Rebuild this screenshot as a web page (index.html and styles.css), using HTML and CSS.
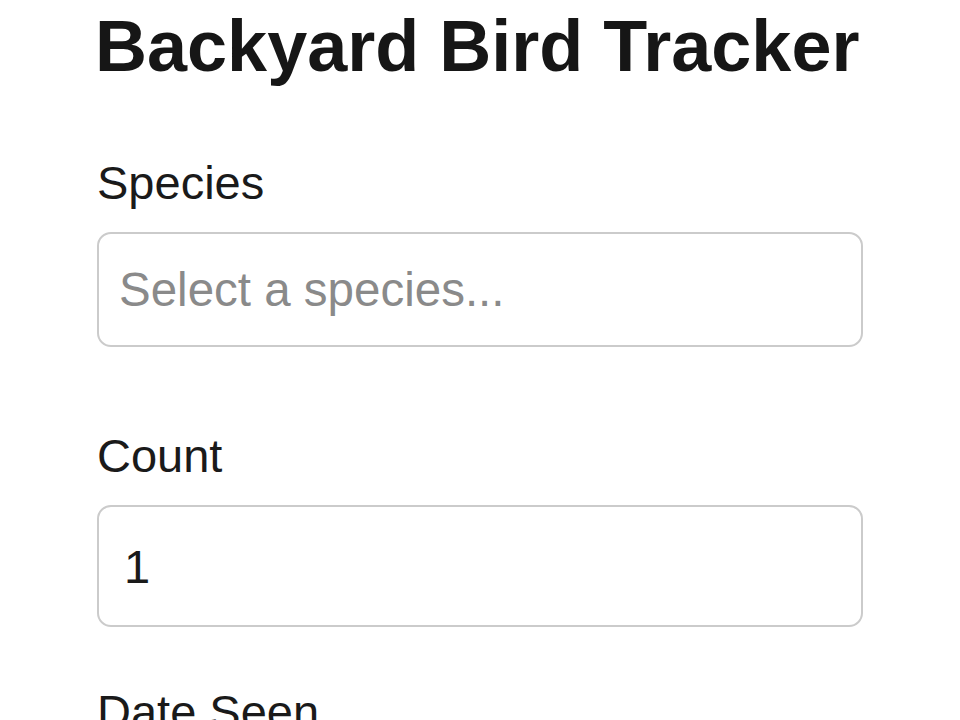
FILE: index.html
```html
<!DOCTYPE html>
<html lang="en">
<head>
<meta charset="utf-8">
<title>Backyard Bird Tracker</title>
<link rel="stylesheet" href="styles.css">
</head>
<body>
<main class="page">
  <h1 class="title">Backyard Bird Tracker</h1>
  <form class="form">
    <div class="field field-species">
      <label class="label" for="species">Species</label>
      <input class="control control-select" id="species" type="text" placeholder="Select a species...">
    </div>
    <div class="field">
      <label class="label" for="count">Count</label>
      <input class="control control-input" id="count" type="number" value="1">
    </div>
    <div class="field">
      <label class="label" for="date">Date Seen</label>
    </div>
  </form>
</main>
</body>
</html>
```
FILE: styles.css
```css
html, body {
  margin: 0;
  padding: 0;
  background: #ffffff;
}

body {
  font-family: "Liberation Sans", Arial, sans-serif;
  color: #1a1a1a;
  overflow: hidden;
}

.page {
  width: 766px;
  margin-left: 97px;
}

.title {
  margin: 6px 0 0 -2px;
  font-size: 72px;
  line-height: 80px;
  font-weight: 700;
  color: #161616;
}

.form {
  display: flex;
  flex-direction: column;
  gap: 58px;
  margin-top: 70px;
}

.field {
  display: flex;
  flex-direction: column;
  gap: 22px;
}

.field-species {
  padding-bottom: 24px;
}

.label {
  font-size: 47px;
  line-height: 54px;
  color: #1a1a1a;
}

.control {
  box-sizing: border-box;
  width: 100%;
  margin: 0;
  border: 2.5px solid #cbcbcb;
  border-radius: 14px;
  background: #ffffff;
  font-family: "Liberation Sans", Arial, sans-serif;
  font-size: 47px;
  color: #1a1a1a;
  outline: none;
  appearance: textfield;
  -moz-appearance: textfield;
}

.control::-webkit-outer-spin-button,
.control::-webkit-inner-spin-button {
  -webkit-appearance: none;
  margin: 0;
}

.control::placeholder {
  color: #8a8a8a;
  opacity: 1;
}

.control-select {
  height: 115px;
  padding: 0 20px;
  font-size: 47.5px;
}

.control-input {
  height: 122px;
  padding: 0 25px;
}
```
